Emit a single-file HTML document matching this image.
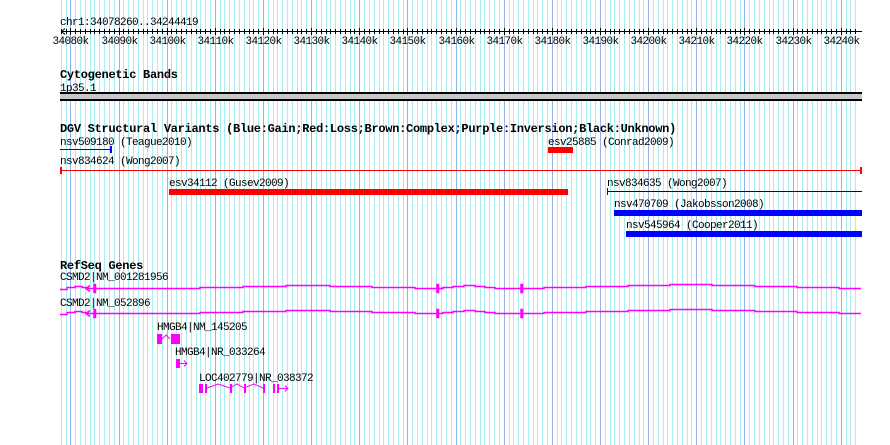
<!DOCTYPE html>
<html><head><meta charset="utf-8"><style>
html,body{margin:0;padding:0;background:#fff;}
svg{display:block}
text{font-family:"Liberation Mono",monospace;font-size:11px;letter-spacing:-0.6px;fill:#000}
.b{font-weight:bold;font-size:12px;letter-spacing:-0.28px}
</style></head><body>
<svg id="s" width="890" height="445" xmlns="http://www.w3.org/2000/svg">
<g id="grid"></g>
<text x="60" y="25">chr1:34078260..34244419</text>
<line x1="61" y1="31.5" x2="862" y2="31.5" stroke="#000"/>
<g id="ticks"></g>
<g id="labels"></g>
<text class="b" x="60" y="78">Cytogenetic Bands</text>
<text x="60" y="91">1p35.1</text>
<rect x="60" y="92" width="802" height="9" fill="#000"/>
<rect x="60" y="94" width="802" height="5" fill="#c8c8c8"/>
<text class="b" x="60" y="132">DGV Structural Variants (Blue:Gain;Red:Loss;Brown:Complex;Purple:Inversion;Black:Unknown)</text>
<text x="60" y="145">nsv509180 (Teague2010)</text>
<line x1="60" y1="149.5" x2="111" y2="149.5" stroke="#00f"/>
<rect x="110" y="146" width="2" height="7" fill="#00f"/>
<text x="548" y="145">esv25885 (Conrad2009)</text>
<rect x="548" y="147" width="25" height="6" fill="#f00"/>
<text x="60" y="164">nsv834624 (Wong2007)</text>
<line x1="61" y1="170.5" x2="861" y2="170.5" stroke="#f00"/>
<rect x="60" y="167" width="2" height="7" fill="#f00"/><rect x="860" y="167" width="2" height="7" fill="#f00"/>
<text x="169" y="186">esv34112 (Gusev2009)</text>
<rect x="169" y="189" width="399" height="6" fill="#f00"/>
<text x="607" y="186">nsv834635 (Wong2007)</text>
<line x1="607" y1="191.5" x2="862" y2="191.5" stroke="#00008b"/>
<rect x="607" y="188" width="1" height="7" fill="#00f"/>
<text x="614" y="207">nsv470709 (Jakobsson2008)</text>
<rect x="614" y="210" width="248" height="6" fill="#00f"/>
<text x="626" y="228">nsv545964 (Cooper2011)</text>
<rect x="626" y="231" width="236" height="6" fill="#00f"/>
<text class="b" x="60" y="269">RefSeq Genes</text>
<text x="60" y="280">CSMD2|NM_001281956</text>
<text x="60" y="306">CSMD2|NM_052896</text>
<g id="genes" fill="none" stroke="#f0f" stroke-width="1.5"></g>
<text x="157" y="330">HMGB4|NM_145205</text>
<text x="175" y="355">HMGB4|NR_033264</text>
<text x="199" y="381">LOC402779|NR_038372</text>
<g fill="#f0f">
<rect x="157" y="334" width="5" height="10"/><rect x="171" y="334" width="9" height="10"/>
<rect x="176" y="359" width="4" height="9"/>
<rect x="199" y="384" width="4" height="9"/><rect x="205" y="384" width="2" height="9"/>
<rect x="230" y="384" width="2" height="9"/><rect x="244" y="384" width="2" height="9"/>
<rect x="263" y="384" width="2" height="9"/><rect x="273" y="384" width="2" height="9"/><rect x="277" y="384" width="2" height="9"/>
</g>
<g fill="none" stroke="#f0f" stroke-width="1">
<polyline points="162,339 166,335 170,339"/>
<line x1="180" y1="363.5" x2="187" y2="363.5"/>
<polyline points="184,360.5 187,363.5 184,366.5"/>
<polyline points="207,388 218,384 230,388 237,384 244,388 254,384 263,388"/>
<line x1="279" y1="388.5" x2="288" y2="388.5"/><polyline points="285,385.5 288,388.5 285,391.5"/>
</g>
</svg>
<script>
var NS="http://www.w3.org/2000/svg",s=document.getElementById('s');
function el(p,t,a){var e=document.createElementNS(NS,t);for(var k in a)e.setAttribute(k,a[k]);document.getElementById(p).appendChild(e);return e;}
var ppk=800/166.159,x0=62;
for(var k=34078;k<=34244;k++){var x=x0+(k-34078.26)*ppk;if(x<60||x>859)continue;var xr=Math.round(x)+0.5;
 var maj=(k%10==0);
 el('grid','line',{x1:xr,y1:0,x2:xr,y2:445,stroke:maj?'#8cb4ea':'#a6ecf0','stroke-width':1});
 el('ticks','line',{x1:xr,y1:maj?28:29,x2:xr,y2:maj?35:34,stroke:'#000'});
 if(maj){var t=el('labels','text',{x:xr,y:44,'text-anchor':'middle'});t.textContent=k+'k';}
}
el('ticks','polyline',{points:'65,28.5 61.5,31.5 65,34.5',fill:'none',stroke:'#000'});
function gene(b){
 var segs=[[60,1],[67,-1],[75,-2],[82,-1],[88,0],[100,0],[200,-1],[243,-2],[286,-3],[330,-2],[372,-1],[415,0],
 [443,-1],[453,-2],[464,-3],[475,-2],[485,-1],[495,0],[544,-1],[586,-2],[628,-3],[670,-4],[712,-3],[755,-2],[797,-1],[839,0],[861,0]];
 var p=[];for(var i=0;i<segs.length-1;i++){var y=b+segs[i][1];p.push(segs[i][0]+','+y,segs[i+1][0]+','+y);}
 el('genes','polyline',{points:p.join(' ')});
 el('genes','polyline',{points:'90,'+(b-3)+' 86,'+b+' 90,'+(b+3)});
 [[94],[437],[521]].forEach(function(e){el('genes','rect',{x:e[0],y:b-4,width:1.5,height:8,fill:'#f0f'});});
}
gene(288.5);gene(313.5);
</script>
</body></html>
